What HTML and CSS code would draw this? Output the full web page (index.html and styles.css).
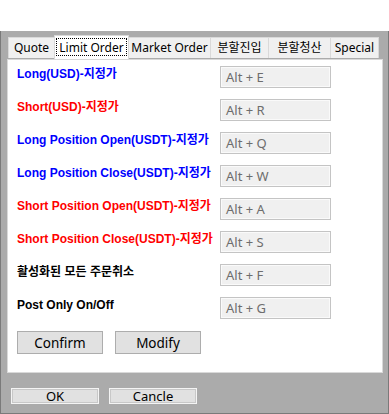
FILE: index.html
```html
<!DOCTYPE html>
<html lang="ko">
<head>
  <meta charset="UTF-8" />
  <title>Hotkey Settings</title>
  <link rel="stylesheet" href="styles.css">
</head>
<body>
  <div class="top"></div>
  <div class="dialog">
    <div class="tabs">
      <div class="tab">Quote</div>
      <div class="tab active"><span class="focus">Limit Order</span></div>
      <div class="tab">Market Order</div>
      <div class="tab">분할진입</div>
      <div class="tab">분할청산</div>
      <div class="tab">Special</div>
    </div>
    <div class="panel">
      <div class="keys">
        <div class="label blue">Long(USD)-지정가</div>
        <div class="key">Alt + E</div>
        <div class="label red">Short(USD)-지정가</div>
        <div class="key">Alt + R</div>
        <div class="label blue">Long Position Open(USDT)-지정가</div>
        <div class="key">Alt + Q</div>
        <div class="label blue">Long Position Close(USDT)-지정가</div>
        <div class="key">Alt + W</div>
        <div class="label red">Short Position Open(USDT)-지정가</div>
        <div class="key">Alt + A</div>
        <div class="label red">Short Position Close(USDT)-지정가</div>
        <div class="key">Alt + S</div>
        <div class="label">활성화된 모든 주문취소</div>
        <div class="key">Alt + F</div>
        <div class="label">Post Only On/Off</div>
        <div class="key">Alt + G</div>
      </div>
      <div class="actions">
        <button class="btn">Confirm</button>
        <button class="btn">Modify</button>
      </div>
    </div>
    <div class="footer">
      <button class="btn small">OK</button>
      <button class="btn small">Cancle</button>
    </div>
  </div>
</body>
</html>
```

FILE: styles.css
```css
body {
  margin: 0;
  background: #fff;
  font-family: "Noto Sans", "Noto Sans CJK KR", sans-serif;
}

.top {
  height: 31px;
  background: #fff;
}

.dialog {
  height: 383px;
  box-sizing: border-box;
  background: #ababab;
  border-left: 1px solid #7a7a7a;
  border-right: 1px solid #7a7a7a;
  border-bottom: 1px solid #7a7a7a;
  padding: 5px 0 0 5px;
}

.tabs {
  display: flex;
  align-items: flex-end;
  padding-left: 2px;
  height: 23px;
  position: relative;
  z-index: 1;
}

.tab {
  height: 21px;
  box-sizing: border-box;
  border: 1px solid #d9d9d9;
  border-left: none;
  border-bottom: none;
  background: #f0f0f0;
  font-size: 12px;
  line-height: 20px;
  color: #000;
  text-align: center;
  margin-bottom: 1px;
}

.tab:first-child {
  border-left: 1px solid #d9d9d9;
}

.tab:nth-child(1) { width: 47px; }
.tab:nth-child(2) { width: 75px; }
.tab:nth-child(3) { width: 82px; }
.tab:nth-child(4) { width: 58px; }
.tab:nth-child(5) { width: 62px; }
.tab:nth-child(6) { width: 48px; }

.tab.active {
  height: 24px;
  background: #fff;
  border-left: 1px solid #d9d9d9;
  margin-bottom: 0;
  margin-left: -1px;
  padding: 2px 1px 0;
}

.focus {
  display: block;
  height: 18px;
  line-height: 17px;
  border: 1px dotted #000;
  box-sizing: border-box;
}

.panel {
  width: 376px;
  height: 314px;
  box-sizing: border-box;
  margin-left: 1px;
  background: #fff;
  border: 1px solid #d9d9d9;
  padding: 6px 0 0 9px;
}

.keys {
  display: grid;
  grid-template-columns: 203px 111px;
  row-gap: 11px;
}

.label {
  font-family: "Liberation Sans", "Noto Sans CJK KR", sans-serif;
  font-weight: bold;
  font-size: 12px;
  line-height: 15px;
  padding-top: 1px;
  color: #000;
}

.label.blue { color: #0000ff; }
.label.red { color: #ff0000; }

.key {
  height: 22px;
  box-sizing: border-box;
  border: 1px solid #c4c4c4;
  box-shadow: inset 0 0 0 1px #fafafa;
  background: #f0f0f0;
  color: #6d6d6d;
  font-size: 13px;
  line-height: 20px;
  padding-left: 5px;
}

.actions {
  display: flex;
  gap: 12px;
  margin-top: 12px;
}

.btn {
  width: 86px;
  height: 23px;
  background: #e1e1e1;
  border: 1px solid #adadad;
  font-family: "Noto Sans", sans-serif;
  font-size: 13.5px;
  color: #000;
  padding: 0;
}

.footer {
  display: flex;
  gap: 10px;
  margin: 15px 0 0 5px;
}

.btn.small {
  width: 88px;
  height: 16px;
  border: 1px solid #f4f4f4;
  box-shadow: inset 0 0 0 1px #c8c8c8;
  font-size: 13px;
  line-height: 13px;
}
```
